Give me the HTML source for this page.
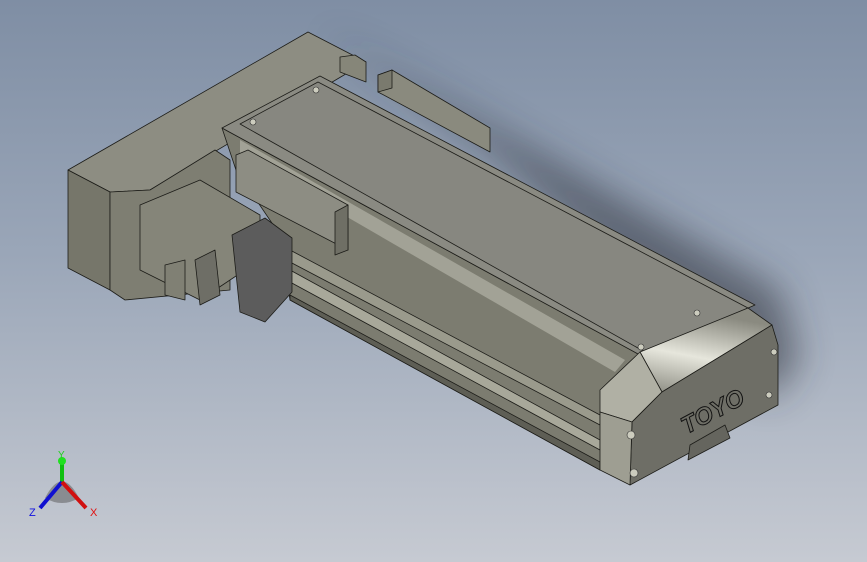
<!DOCTYPE html>
<html><head><style>
html,body{margin:0;padding:0;width:867px;height:562px;overflow:hidden}
body{background:linear-gradient(180deg,#7f8ea4 0%,#9aa6b8 45%,#c6cad2 100%)}
svg{position:absolute;left:0;top:0}
</style></head><body>
<svg width="867" height="562" viewBox="0 0 867 562">
<defs>
<filter id="b" x="-50%" y="-50%" width="200%" height="200%"><feGaussianBlur stdDeviation="18"/></filter>
<linearGradient id="cap" x1="0" y1="1" x2="0.3" y2="0"><stop offset="0" stop-color="#8a8a80"/><stop offset="0.5" stop-color="#e6e6dc"/><stop offset="1" stop-color="#8a8a80"/></linearGradient>
</defs>
<g fill="#2a2e38" opacity="0.55" filter="url(#b)">
<polygon points="320,30 780,290 800,360 770,400 490,150"/>
</g>
<g stroke="#1c1c18" stroke-width="0.8" stroke-linejoin="round">
<!-- right bracket -->
<polygon points="378,75 392,70 490,128 490,152 378,92" fill="#8a8a7e"/>
<polygon points="378,75 392,70 392,88 378,92" fill="#7a7a6e"/>
<!-- motor box -->
<polygon points="68,170 308,32 366,62 150,190 110,192" fill="#8d8d82"/>
<polygon points="68,170 110,192 110,290 68,268" fill="#76766a"/>
<polygon points="110,192 150,190 215,150 230,160 230,290 125,300 110,290" fill="#7e7e72"/>
<polygon points="340,57 355,55 366,62 366,82 340,72" fill="#868679"/>
<!-- body side -->
<polygon points="222,128 640,355 605,390 600,470 290,300 280,235 236,170" fill="#7c7c70"/>
<polygon points="290,270 600,440 600,450 290,282" fill="#a8a89a"/>
<polygon points="290,295 600,462 600,470 290,300" fill="#5e5e55"/>
<polygon points="240,140 625,360 615,372 240,155" fill="#a2a296" stroke="none"/>
<polygon points="290,250 600,415 600,425 290,262" fill="#9a9a8c"/>
<!-- top plate -->
<polygon points="222,128 320,76 755,305 640,355" fill="#8a8a82"/>
<polygon points="240,124 318,82 748,308 645,352" fill="#878780"/>
<!-- carriage block -->
<polygon points="236,155 248,150 348,205 348,250 236,192" fill="#8d8d83"/>
<polygon points="348,205 348,250 335,255 335,212" fill="#6f6f65"/>
<!-- motor -->
<polygon points="140,205 200,180 260,215 260,260 200,300 140,270" fill="#858579"/>
<polygon points="165,265 185,260 185,300 165,295" fill="#808074"/>
<polygon points="195,260 215,250 220,295 200,305" fill="#6e6e66"/>
<polygon points="232,235 265,218 292,238 292,292 265,322 240,312" fill="#5c5c5c"/>
<!-- end cap -->
<polygon points="640,352 748,308 772,325 662,392" fill="url(#cap)"/>
<polygon points="600,390 640,352 662,392 632,422 600,412" fill="#b0b0a4"/>
<polygon points="632,422 662,392 772,325 778,345 778,405 630,485" fill="#6e6e66"/>
<polygon points="600,412 632,422 630,485 600,470" fill="#9e9e92"/>
<polygon points="690,445 725,425 730,438 688,460" fill="#65655e"/>
</g>
<text x="672" y="424" font-family="Liberation Sans,sans-serif" font-weight="bold" font-style="italic" font-size="24" fill="#6e6e66" stroke="#111" stroke-width="1" transform="rotate(-28 700 400)">TOYO</text>
<g fill="#ccccbe" stroke="#333" stroke-width="0.6">
<circle cx="316" cy="90" r="3"/><circle cx="253" cy="122" r="3"/><circle cx="697" cy="313" r="3"/><circle cx="641" cy="347" r="3"/>
<circle cx="631" cy="435" r="4"/><circle cx="634" cy="473" r="4"/><circle cx="774" cy="352" r="3"/><circle cx="769" cy="395" r="3"/>
</g>
<g>
<path d="M45,498 Q62,465 79,498 Q62,508 45,498Z" fill="#555" opacity="0.5"/>
<line x1="62" y1="482" x2="62" y2="462" stroke="#10c010" stroke-width="4"/>
<circle cx="62" cy="461" r="4" fill="#20e020"/>
<line x1="62" y1="482" x2="40" y2="508" stroke="#1010d0" stroke-width="4"/>
<line x1="62" y1="482" x2="86" y2="508" stroke="#d01010" stroke-width="4"/>
<text x="58" y="458" font-family="Liberation Sans,sans-serif" font-size="10" fill="#20d020">Y</text>
<text x="29" y="516" font-family="Liberation Sans,sans-serif" font-size="11" fill="#1010e0">Z</text>
<text x="90" y="516" font-family="Liberation Sans,sans-serif" font-size="11" fill="#e01010">X</text>
</g>
</svg>
</body></html>
